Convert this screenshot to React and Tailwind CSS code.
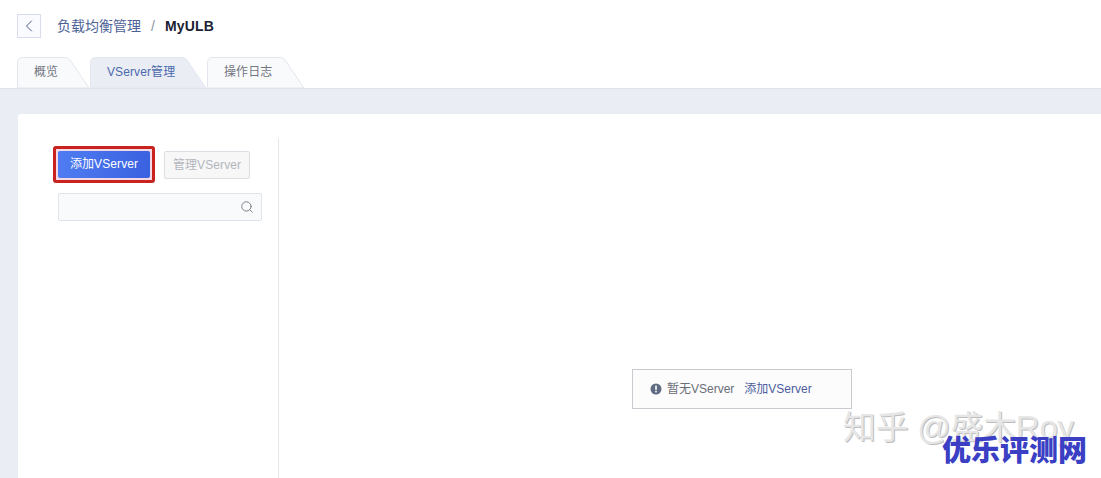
import React from "react";
import { ChevronLeft, Search } from "lucide-react";

const font = "font-['Liberation_Sans','Noto_Sans_CJK_SC',sans-serif]";

function Tab({ width, label, active }) {
  return (
    <div className="relative h-[31px]" style={{ width }}>
      <svg className="absolute inset-0" width={width} height="31" viewBox={`0 0 ${width} 31`}>
        <path
          d={`M0.5 31V6Q0.5 0.5 6 0.5H${width - 25}Q${width - 22} 0.5 ${width - 20} 3L${width - 1} 31Z`}
          fill={active ? "#eaedf4" : "#f9fafc"}
          stroke={active ? "#e4e7f0" : "#e3e6ee"}
        />
      </svg>
      <span className={`absolute top-[8px] left-[17px] text-[12px] leading-[14px] tracking-[0.1px] whitespace-nowrap ${active ? "text-[#4a69ae]" : "text-[#73767f]"}`}>
        {label}
      </span>
    </div>
  );
}

export default function App() {
  return (
    <div className={`${font} relative w-[1101px] h-[478px] overflow-hidden bg-white flex flex-col`}>
      <div className="h-[88px] flex flex-col pl-[17px]">
        <div className="flex items-center h-[24px] mt-[14px]">
          <button className="w-[24px] h-[24px] flex items-center justify-center border border-[#d9dcec] bg-[#fafbff] text-[#4d5a88]">
            <ChevronLeft size={20} strokeWidth={1.2} />
          </button>
          <span className="ml-[16px] mt-[1px] text-[14px] text-[#4d6196]">负载均衡管理</span>
          <span className="ml-[10px] mt-[1px] text-[14px] text-[#8d92a4]">/</span>
          <span className="ml-[10px] mt-[1px] text-[14px] font-bold tracking-[0.2px] text-[#1b2133]">MyULB</span>
        </div>
        <div className="flex mt-[19px]">
          <Tab width={73} label="概览" />
          <Tab width={117} label="VServer管理" active />
          <Tab width={98} label="操作日志" />
        </div>
      </div>

      <div className="flex-1 bg-[#eaedf4] border-t border-[#dfe2ec] pt-[25px] pl-[18px]">
        <div className="h-full bg-white rounded-tl-[3px] pt-[24px] flex">
          <div className="w-[261px] h-full border-r border-[#e4e6ec] pt-[8px] pl-[40px]">
            <div className="flex items-center">
              <div className="p-[2px] border-[3px] border-[#c9231f] rounded-[3px] bg-[#f3d9e6] -ml-[5px] flex">
                <button className="w-[92px] h-[27px] rounded-[2px] bg-gradient-to-r from-[#4f7cf2] to-[#3a61e0] text-white text-[12px] leading-[27px] tracking-[0.1px]">
                  添加VServer
                </button>
              </div>
              <button className="ml-[9px] w-[86px] h-[28px] rounded-[2px] border border-[#dcdee4] bg-[#f7f7f8] text-[#b4b6bc] text-[12px] tracking-[0.1px]">
                管理VServer
              </button>
            </div>
            <div className="mt-[10px] w-[204px] h-[28px] border border-[#e0e3ec] bg-[#f9fafc] rounded-[2px] flex items-center justify-end pr-[7px] text-[#6f727b]">
              <Search size={14} strokeWidth={1.5} />
            </div>
          </div>
          <div className="flex-1 pt-[231px] pl-[353px]">
            <div className="w-[220px] h-[40px] border border-[#c8cad0] bg-[#fcfcfd] flex items-center pl-[17px] text-[12px]">
              <svg width="12" height="12" viewBox="0 0 12 12">
                <circle cx="6" cy="6" r="5.5" fill="#5f6b82" />
                <rect x="5.2" y="2.6" width="1.6" height="4.2" fill="#fff" />
                <rect x="5.2" y="7.8" width="1.6" height="1.6" fill="#fff" />
              </svg>
              <span className="ml-[5px] text-[#6b6e78]">暂无VServer</span>
              <span className="ml-[10px] text-[#4d5ca0]">添加VServer</span>
            </div>
          </div>
        </div>
      </div>

      <div className="absolute left-[843px] top-[409px] text-[33px] leading-[38px] tracking-[-0.3px] text-[#e6e6e6] whitespace-nowrap [text-shadow:1px_1px_0_#bdbdbd]">
        知乎 @盛木Roy
      </div>
      <div className="absolute left-[942px] top-[433px] text-[29px] leading-[36px] font-black text-[#3b3fc4] whitespace-nowrap">
        优乐评测网
      </div>
    </div>
  );
}
